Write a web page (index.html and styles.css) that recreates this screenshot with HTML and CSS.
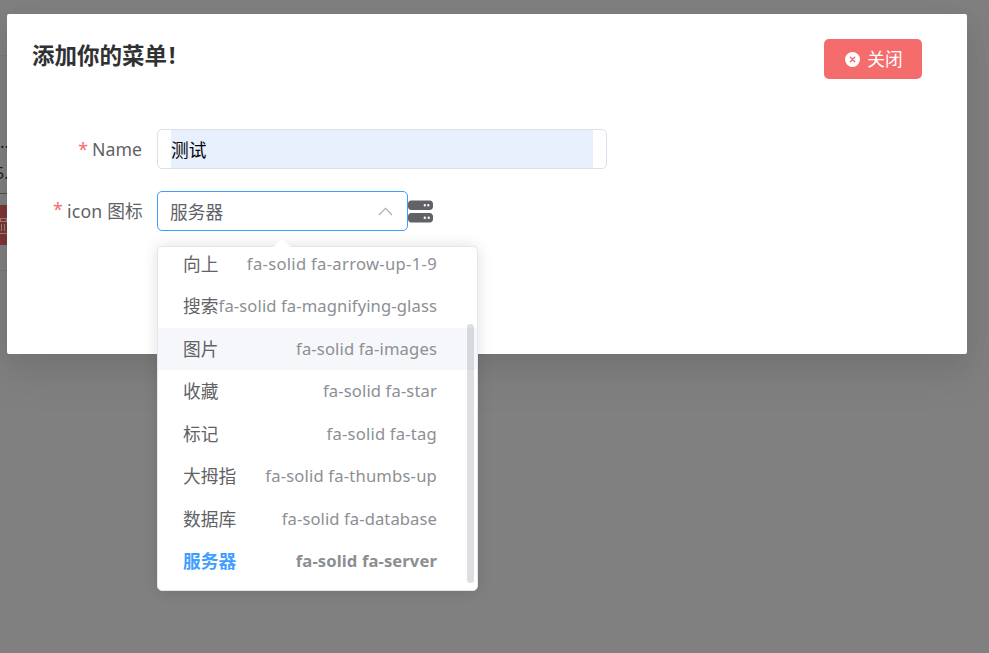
FILE: index.html
```html
<!DOCTYPE html>
<html lang="zh-CN">
<head>
<meta charset="utf-8">
<title>添加你的菜单!</title>
<link rel="stylesheet" href="styles.css">
</head>
<body>
<div class="page">
  <div class="page-head"></div>
  <div class="page-card">
    <div class="cell-dots">...</div>
    <div class="cell-num">5.</div>
    <div class="page-btn">
      <svg width="16" height="18" viewBox="0 0 16 18" fill="none" stroke="#a58080"><path d="M0 4.500h16M4.500 4V1.500h6V4M1.500 5v11.500h12V5M5.500 7v7M8.500 7v7M0 16.500h16"/></svg>
    </div>
  </div>
</div>
<div class="dialog">
  <header class="dialog-head">
    <h1 class="title">添加你的菜单<span class="bang">!</span></h1>
    <button class="close">
      <svg class="close-icon" viewBox="0 0 512 512"><path fill="#fff" d="M256 0a256 256 0 1 0 0 512 256 256 0 1 0 0-512z"/><path d="M182 182l148 148M330 182L182 330" stroke="#f56c6c" stroke-width="50" stroke-linecap="round"/></svg>
      <span class="close-text">关闭</span>
    </button>
  </header>
  <form class="form">
    <div class="row">
      <label class="label label-name"><span class="star">*</span><span>Name</span></label>
      <div class="input"><div class="autofill">测试</div></div>
    </div>
    <div class="row">
      <label class="label label-icon"><span class="star">*</span><span>icon 图标</span></label>
      <div class="select">
        <span>服务器</span>
        <svg class="caret" width="15" height="9" viewBox="0 0 15 9" fill="none" stroke="#a8abb2" stroke-width="1.1"><path d="M1 8L7.500 1.300 14 8"/></svg>
        <div class="dropdown">
          <div class="arrow"></div>
          <div class="options">
            <div class="option"><span>向上</span><span class="code c1">fa-solid fa-arrow-up-1-9</span></div>
            <div class="option"><span>搜索</span><span class="code c2">fa-solid fa-magnifying-glass</span></div>
            <div class="option hover"><span>图片</span><span class="code c3">fa-solid fa-images</span></div>
            <div class="option"><span>收藏</span><span class="code c4">fa-solid fa-star</span></div>
            <div class="option"><span>标记</span><span class="code c5">fa-solid fa-tag</span></div>
            <div class="option"><span>大拇指</span><span class="code c6">fa-solid fa-thumbs-up</span></div>
            <div class="option"><span>数据库</span><span class="code c7">fa-solid fa-database</span></div>
            <div class="option selected"><span>服务器</span><span class="code c8">fa-solid fa-server</span></div>
          </div>
          <div class="thumb"></div>
        </div>
      </div>
      <svg class="server" width="25" height="25" viewBox="0 0 512 512"><path fill="#606266" fill-rule="evenodd" d="M64 32C28.700 32 0 60.700 0 96v64c0 35.300 28.700 64 64 64h384c35.300 0 64-28.700 64-64V96c0-35.300-28.700-64-64-64H64zm280 72a24 24 0 1 1 0 48 24 24 0 1 1 0-48zm48 24a24 24 0 1 1 48 0 24 24 0 1 1-48 0zM64 288c-35.300 0-64 28.700-64 64v64c0 35.300 28.700 64 64 64h384c35.300 0 64-28.700 64-64v-64c0-35.300-28.700-64-64-64H64zm280 72a24 24 0 1 1 0 48 24 24 0 1 1 0-48zm56 24a24 24 0 1 1 48 0 24 24 0 1 1-48 0z"/></svg>
    </div>
  </form>
</div>
</body>
</html>
```
FILE: styles.css
```css
* { box-sizing: border-box; }
body {
  margin: 0;
  width: 989px;
  height: 653px;
  overflow: hidden;
  position: relative;
  background: #808080;
  font-family: "Noto Sans", "Noto Sans CJK SC", sans-serif;
  font-size: 17.7px;
  color: #606266;
}
.page { width: 60px; }
.page-head { height: 56px; border-bottom: 1px solid #787878; }
.page-card { height: 215px; padding-top: 80px; border-bottom: 1px solid #777; }
.cell-dots { height: 27px; line-height: 12px; font-size: 17px; color: #222; }
.cell-num { height: 31px; margin-left: -5px; line-height: 20px; font-size: 16px; color: #222; border-bottom: 1px solid #505050; }
.page-btn { margin-top: 11px; height: 40px; background: #7b3636; padding: 12px 0 0; }
.page-btn svg { display: block; margin-left: -4px; }
.dialog {
  position: absolute;
  left: 7px;
  top: 14px;
  width: 960px;
  height: 340px;
  background: #fff;
  border-radius: 2px;
  box-shadow: 0 15px 45px 10px rgba(0, 0, 0, .06), 0 10px 25px rgba(0, 0, 0, .06);
}
.dialog-head {
  display: flex;
  justify-content: space-between;
  align-items: flex-start;
  padding: 25px 45px 0 25px;
  height: 115px;
}
.title { margin: 0; font-size: 22.5px; line-height: 33px; font-weight: 700; color: #303133; white-space: nowrap; }
.bang { margin-left: 2px; }
.close {
  display: flex;
  align-items: center;
  justify-content: center;
  width: 98px;
  height: 40px;
  padding: 0 0 0 2px;
  border: 0;
  border-radius: 5px;
  background: #f56c6c;
  color: #fff;
  font: inherit;
  font-size: 17.7px;
}
.close-icon { width: 15px; height: 15px; margin-right: 7px; }
.close-text { padding-bottom: 3px; }
.form { display: flex; flex-direction: column; gap: 22px; }
.row { display: flex; align-items: center; height: 40px; }
.label { width: 150px; padding-right: 14px; display: flex; justify-content: flex-end; white-space: nowrap; }
.label-name { padding-right: 15px; }
.label-icon { padding-bottom: 2px; letter-spacing: .2px; }
.star { color: #f56c6c; margin-right: 4px; }
.input {
  width: 450px;
  height: 40px;
  padding: 0 13px;
  border: 1px solid #dcdfe6;
  border-radius: 5px;
}
.autofill { height: 38px; line-height: 40px; background: #e8f0fe; color: #000; }
.select {
  position: relative;
  display: flex;
  align-items: center;
  justify-content: space-between;
  width: 251px;
  height: 40px;
  padding: 0 14px 0 12px;
  border: 1px solid #409eff;
  border-radius: 5px;
}
.server { display: block; }
.dropdown {
  position: absolute;
  left: -1px;
  top: 54px;
  width: 321px;
  height: 345px;
  border: 1px solid #e4e7ed;
  border-radius: 5px;
  background: #fff;
  box-shadow: 0 0 15px rgba(0, 0, 0, .12);
}
.arrow {
  position: absolute;
  left: 118px;
  top: -6px;
  width: 12px;
  height: 12px;
  background: #fff;
  transform: rotate(45deg);
  border-radius: 2px 0 0 0;
}
.options {
  position: relative;
  display: flex;
  flex-direction: column;
  justify-content: flex-end;
  height: 343px;
  padding-bottom: 7.3px;
  overflow: hidden;
}
.option {
  flex: none;
  display: flex;
  justify-content: space-between;
  height: 42.5px;
  line-height: 42.5px;
  padding: 0 40px 0 25px;
  white-space: nowrap;
}
.code { font-size: 16.6px; color: #8c8f94; }
.c1 { letter-spacing: .31px; }
.c2 { letter-spacing: .11px; }
.c3 { letter-spacing: .14px; }
.c4 { letter-spacing: .13px; }
.c5 { letter-spacing: .21px; }
.c6 { letter-spacing: .19px; }
.c7 { letter-spacing: .09px; }
.c8 { letter-spacing: .11px; }
.hover { background: #f5f7fa; }
.selected { color: #409eff; font-weight: 700; }
.thumb {
  position: absolute;
  right: 3px;
  top: 77px;
  width: 7px;
  height: 259px;
  border-radius: 4px;
  background: rgba(144, 147, 153, .3);
}
```
